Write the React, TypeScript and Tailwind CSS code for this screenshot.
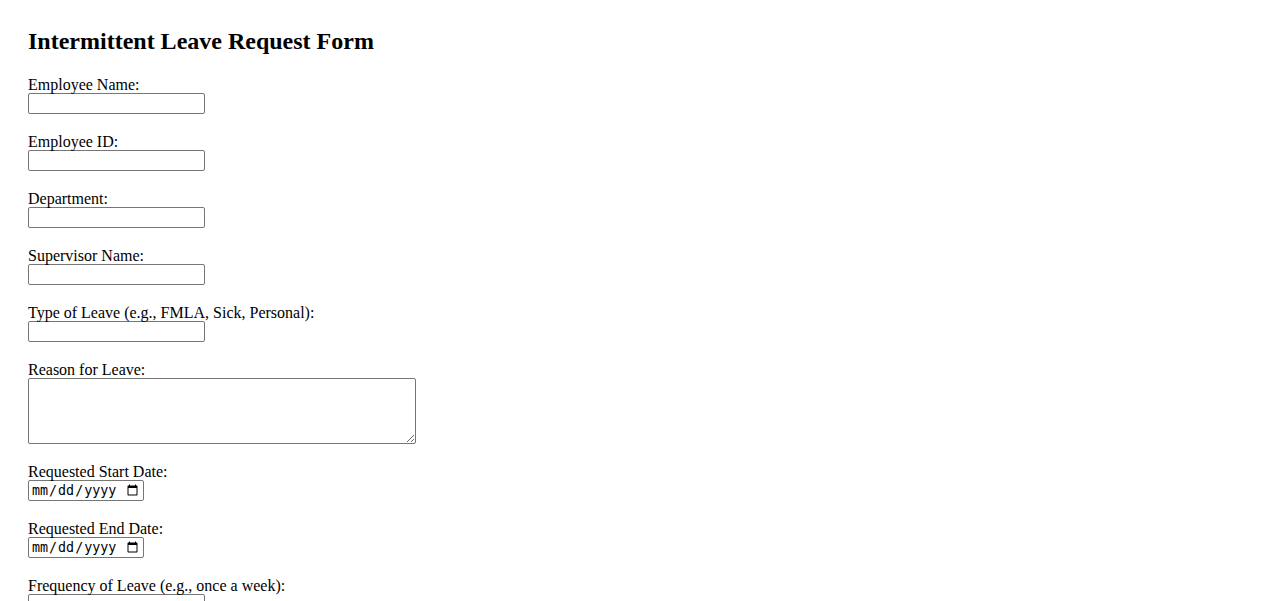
const fields = [
  { id: "employeeName", label: "Employee Name:" },
  { id: "employeeId", label: "Employee ID:" },
  { id: "department", label: "Department:" },
  { id: "supervisorName", label: "Supervisor Name:" },
  { id: "leaveType", label: "Type of Leave (e.g., FMLA, Sick, Personal):" },
];

const labelCls = "block pt-[1px] leading-[17px]";

const inputCls =
  "block w-[177px] h-[21px] border border-[#767676] rounded-[2px] bg-white px-[2px] text-[13.33px] font-['DejaVu_Sans',sans-serif]";

const dateCls =
  "block w-[116px] h-[21px] border border-[#767676] rounded-[2px] bg-white px-[2px] text-[13.33px] font-['DejaVu_Sans_Mono',monospace]";

const App = () => {
  return (
    <div className="min-h-screen bg-white text-black font-['Liberation_Serif',serif] text-[16px] pt-[28px] px-[28px]">
      <h2 className="font-bold text-[24px] leading-[27px] mb-[20px]">Intermittent Leave Request Form</h2>
      <form>
        {fields.map((f) => (
          <div key={f.id} className="mb-[18px]">
            <label htmlFor={f.id} className={labelCls}>{f.label}</label>
            <input id={f.id} type="text" className={inputCls} />
          </div>
        ))}
        <div className="mb-[18px]">
          <label htmlFor="reason" className={labelCls}>Reason for Leave:</label>
          <textarea id="reason" className="block w-[388px] h-[66px] border border-[#767676] rounded-[2px] bg-white p-[2px] text-[13.33px] font-['DejaVu_Sans_Mono',monospace]" />
        </div>
        <div className="mb-[18px]">
          <label htmlFor="startDate" className={labelCls}>Requested Start Date:</label>
          <input id="startDate" type="date" className={dateCls} />
        </div>
        <div className="mb-[18px]">
          <label htmlFor="endDate" className={labelCls}>Requested End Date:</label>
          <input id="endDate" type="date" className={dateCls} />
        </div>
        <div className="mb-[18px]">
          <label htmlFor="frequency" className={labelCls}>Frequency of Leave (e.g., once a week):</label>
          <input id="frequency" type="text" className={inputCls} />
        </div>
        <div className="mb-[18px]">
          <label htmlFor="duration" className={labelCls}>Expected Duration of Each Absence:</label>
          <input id="duration" type="text" className={inputCls} />
        </div>
        <button type="submit" className="border border-[#767676] rounded-[2px] bg-[#efefef] px-[6px] py-[1px] text-[13.33px] font-['DejaVu_Sans',sans-serif]">Submit Request</button>
      </form>
    </div>
  );
};

export default App;
